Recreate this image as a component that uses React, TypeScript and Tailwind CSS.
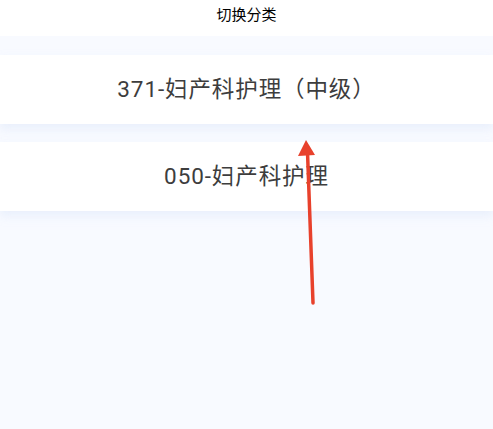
const categories = ['371-妇产科护理（中级）', '050-妇产科护理']

export default function App() {
  return (
    <div
      className="relative min-h-[429px] w-full overflow-hidden bg-[#f8faff]"
      style={{ fontFamily: 'Roboto, "Noto Sans CJK SC", sans-serif' }}
    >
      {/* Header */}
      <div className="flex h-[36px] items-start justify-center bg-white pt-[5px]">
        <span className="text-[15px] leading-[20px] text-black">切换分类</span>
      </div>

      {/* Category list */}
      <div className="flex flex-col gap-[18px] pt-[19px]">
        {categories.map((name) => (
          <div
            key={name}
            className="flex h-[69px] items-center justify-center bg-white pb-[2px] shadow-[0_5px_9px_rgba(205,220,245,0.35)]"
          >
            <span className="text-[22.5px] leading-[28px] tracking-[0.9px] text-[#3d3d3d]">{name}</span>
          </div>
        ))}
      </div>

      {/* Annotation arrow */}
      <svg className="pointer-events-none absolute left-0 top-0" width="493" height="429">
        <line x1="313" y1="303" x2="307.5" y2="152" stroke="#e8412c" strokeWidth="3.5" strokeLinecap="round" />
        <polygon points="306,140 298,156 315,155" fill="#e8412c" />
      </svg>
    </div>
  )
}
